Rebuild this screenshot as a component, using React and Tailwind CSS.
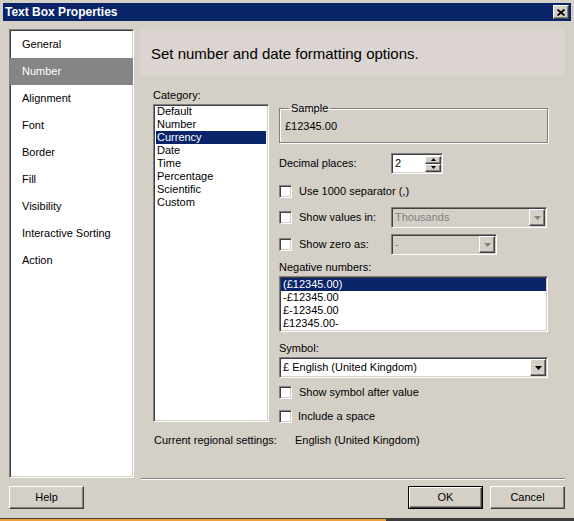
import React from "react";

const sunken =
  "border border-t-[#808080] border-l-[#808080] border-r-white border-b-white shadow-[inset_1px_1px_0_#404040,inset_-1px_-1px_0_#d4d0c8]";
const raised =
  "bg-[#d4d0c8] border border-t-white border-l-white border-r-[#404040] border-b-[#404040] shadow-[inset_-1px_-1px_0_#808080]";

const navItems = [
  "General",
  "Number",
  "Alignment",
  "Font",
  "Border",
  "Fill",
  "Visibility",
  "Interactive Sorting",
  "Action",
];

const categories = [
  "Default",
  "Number",
  "Currency",
  "Date",
  "Time",
  "Percentage",
  "Scientific",
  "Custom",
];

const negatives = ["(£12345.00)", "-£12345.00", "£-12345.00", "£12345.00-"];

function Arrow({ disabled }) {
  return (
    <svg width="7" height="4" viewBox="0 0 7 4">
      <path d="M0 0h7L3.5 4z" fill={disabled ? "#808080" : "#000"} />
    </svg>
  );
}

function DropButton({ disabled }) {
  return (
    <div className={`w-[16px] h-[17px] flex items-center justify-center ${raised}`}>
      <Arrow disabled={disabled} />
    </div>
  );
}

function Checkbox({ label, gap = "ml-[7px]" }) {
  return (
    <div className="flex items-center h-[13px]">
      <div className={`w-[13px] h-[13px] bg-white ${sunken}`} />
      <span className={`${gap} leading-[13px]`}>{label}</span>
    </div>
  );
}

function Button({ children, isDefault }) {
  return (
    <div className={isDefault ? "border border-black" : ""}>
      <div
        className={`${isDefault ? "w-[73px] h-[21px]" : "w-[75px] h-[23px]"} flex items-center justify-center ${raised}`}
      >
        {children}
      </div>
    </div>
  );
}

export default function App() {
  return (
    <div className="w-[574px] h-[521px] bg-[#d4d0c8] flex flex-col overflow-hidden font-['Liberation_Sans',Arial,sans-serif] text-[11px] text-black">
      <div className="px-[3px] pt-[3px]">
        {/* title bar */}
        <div className="h-[18px] bg-[#0a246a] flex items-center justify-between pl-[2px] pr-[2px]">
          <span className="text-white font-bold text-[12px] leading-[18px]">
            Text Box Properties
          </span>
          <div className={`w-[16px] h-[14px] flex items-center justify-center ${raised}`}>
            <svg width="8" height="7" viewBox="0 0 8 7">
              <path d="M0.5 0.5L7.5 6.5M7.5 0.5L0.5 6.5" stroke="#000" strokeWidth="1.8" />
            </svg>
          </div>
        </div>

        <div className="flex mt-[8px] ml-[6px]">
          {/* nav */}
          <div className={`w-[125px] h-[449px] bg-white pt-[1px] ${sunken}`}>
            {navItems.map((n) => (
              <div
                key={n}
                className={`h-[27px] flex items-center pl-[12px] ${
                  n === "Number" ? "bg-[#858585] text-white" : ""
                }`}
              >
                {n}
              </div>
            ))}
          </div>

          {/* right side */}
          <div className="ml-[6px] w-[425px] h-[451px] flex flex-col">
            <div className="h-[47px] bg-[#dbd4d0] flex items-center pl-[11px]">
              <span className="text-[15px] leading-[18px] mt-[2px]">
                Set number and date formatting options.
              </span>
            </div>

            <div className="flex mt-[13px] ml-[13px]">
              {/* category */}
              <div className="w-[116px]">
                <div className="leading-[13px]">Category:</div>
                <div className={`mt-[2px] h-[318px] bg-white px-[2px] ${sunken}`}>
                  {categories.map((c) => (
                    <div
                      key={c}
                      className={`h-[13px] leading-[13px] pl-[1px] ${
                        c === "Currency" ? "bg-[#0a246a] text-white" : ""
                      }`}
                    >
                      {c}
                    </div>
                  ))}
                </div>
              </div>

              {/* options */}
              <div className="ml-[10px] w-[269px] mt-[13px]">
                <fieldset className="border border-[#808080] shadow-[1px_1px_0_white,inset_1px_1px_0_white]">
                  <legend className="ml-[9px] px-[2px] leading-[13px]">Sample</legend>
                  <div className="pl-[5px] pt-[5px] pb-[9px] leading-[13px]">£12345.00</div>
                </fieldset>

                <div className="flex items-center mt-[10px]">
                  <span className="w-[112px] leading-[13px]">Decimal places:</span>
                  <div className={`w-[52px] h-[21px] bg-white flex items-center justify-between pl-[3px] pr-[1px] ${sunken}`}>
                    <span className="leading-[13px]">2</span>
                    <div className="flex flex-col">
                      <div className={`w-[16px] h-[8px] flex items-center justify-center ${raised}`}>
                        <svg width="5" height="3" viewBox="0 0 5 3">
                          <path d="M2.5 0L5 3H0z" fill="#000" />
                        </svg>
                      </div>
                      <div className={`w-[16px] h-[8px] flex items-center justify-center ${raised}`}>
                        <svg width="5" height="3" viewBox="0 0 5 3">
                          <path d="M0 0h5L2.5 3z" fill="#000" />
                        </svg>
                      </div>
                    </div>
                  </div>
                </div>

                <div className="mt-[11px]">
                  <Checkbox label="Use 1000 separator (,)" />
                </div>

                <div className="flex items-center mt-[9px] h-[21px]">
                  <div className="w-[112px]">
                    <Checkbox label="Show values in:" />
                  </div>
                  <div className={`w-[156px] h-[21px] bg-[#d4d0c8] flex items-center justify-between pl-[3px] pr-[1px] ${sunken}`}>
                    <span className="text-[#808080] leading-[13px]">Thousands</span>
                    <DropButton disabled />
                  </div>
                </div>

                <div className="flex items-center mt-[6px] h-[21px]">
                  <div className="w-[112px]">
                    <Checkbox label="Show zero as:" />
                  </div>
                  <div className={`w-[106px] h-[21px] bg-[#d4d0c8] flex items-center justify-between pl-[3px] pr-[1px] ${sunken}`}>
                    <span className="text-[#808080] leading-[13px]">-</span>
                    <DropButton disabled />
                  </div>
                </div>

                <div className="mt-[6px] leading-[13px]">Negative numbers:</div>
                <div className={`mt-[2px] h-[56px] bg-white p-[1px] ${sunken}`}>
                  {negatives.map((n, i) => (
                    <div
                      key={n}
                      className={`h-[13px] leading-[13px] pl-[2px] ${
                        i === 0 ? "bg-[#0a246a] text-white" : ""
                      }`}
                    >
                      {n}
                    </div>
                  ))}
                </div>

                <div className="mt-[10px] leading-[13px]">Symbol:</div>
                <div className={`mt-[2px] h-[21px] bg-white flex items-center justify-between pl-[3px] pr-[1px] ${sunken}`}>
                  <span className="leading-[13px]">£ English (United Kingdom)</span>
                  <DropButton />
                </div>

                <div className="mt-[8px]">
                  <Checkbox label="Show symbol after value" />
                </div>
                <div className="mt-[11px]">
                  <Checkbox label="Include a space" gap="ml-[6px]" />
                </div>
              </div>
            </div>

            <div className="flex mt-[11px] ml-[14px] leading-[13px]">
              <span className="w-[141px]">Current regional settings:</span>
              <span>English (United Kingdom)</span>
            </div>

            <div className="mt-auto ml-[1px] h-[2px] border-t border-t-[#808080] border-b border-b-white" />
          </div>
        </div>

        {/* buttons */}
        <div className="flex items-center justify-between mt-[6px] ml-[6px] mr-[6px]">
          <Button>Help</Button>
          <div className="flex gap-[7px]">
            <Button isDefault>OK</Button>
            <Button>Cancel</Button>
          </div>
        </div>
      </div>

      <div className="mt-auto flex flex-col">
        <div className="h-[1px] bg-[#404040]" />
        <div className="h-[2px] flex">
          <div className="w-[386px] bg-[#f0a040]" />
          <div className="flex-1 bg-[#3c3c3c]" />
        </div>
      </div>
    </div>
  );
}
